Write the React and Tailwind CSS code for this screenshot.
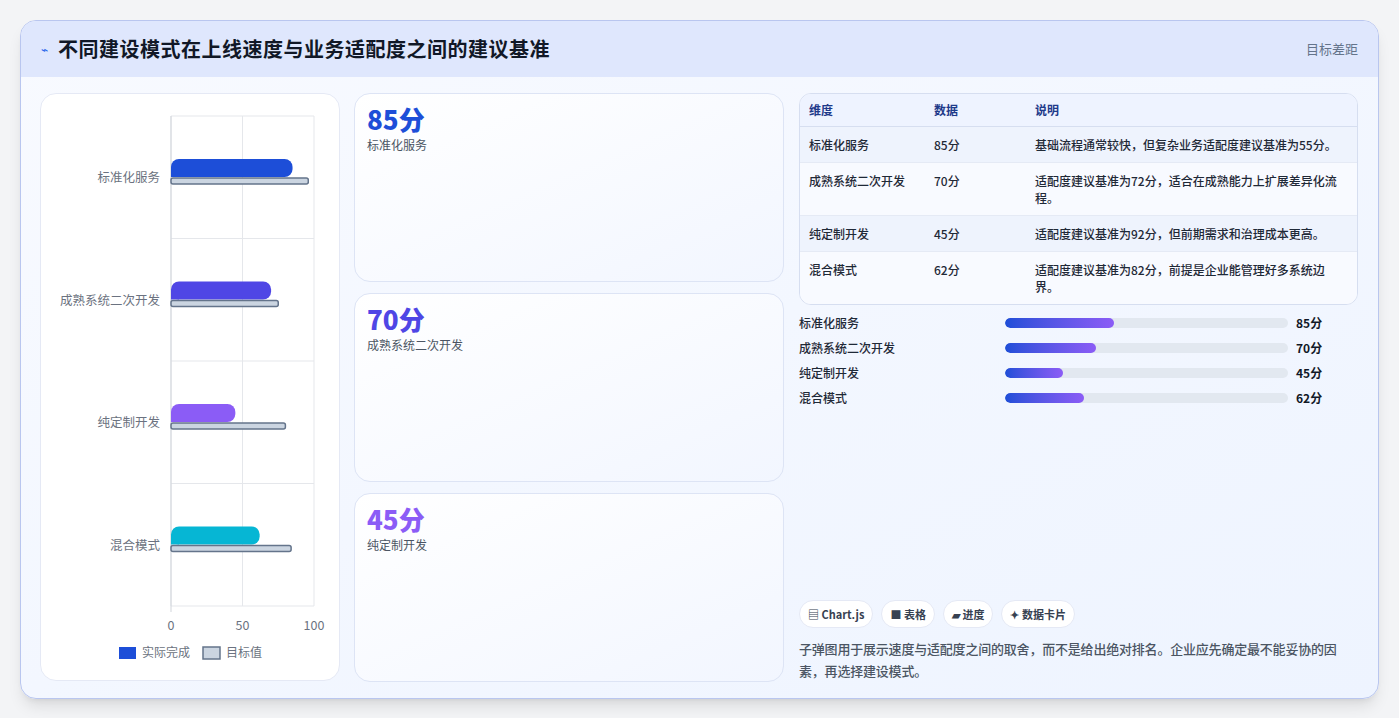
const rows = [
  { name: '标准化服务', v: 85, t: 96, c: '#1d4ed8', pct: 38.5, desc: '基础流程通常较快，但复杂业务适配度建议基准为55分。' },
  { name: '成熟系统二次开发', v: 70, t: 75, c: '#4f46e5', pct: 32, desc: '适配度建议基准为72分，适合在成熟能力上扩展差异化流程。' },
  { name: '纯定制开发', v: 45, t: 80, c: '#8b5cf6', pct: 20.5, desc: '适配度建议基准为92分，但前期需求和治理成本更高。' },
  { name: '混合模式', v: 62, t: 84, c: '#06b6d4', pct: 28, desc: '适配度建议基准为82分，前提是企业能管理好多系统边界。' },
];

const font = { fontFamily: '"Noto Sans CJK SC", "Noto Sans", sans-serif' };

function Chart() {
  const x0 = 130, sc = 1.43, top = 22, band = 122.5;
  return (
    <svg width="298" height="585" viewBox="0 0 298 585" style={font}>
      {[0, 50, 100].map((g) => (
        <line key={g} x1={x0 + g * sc} x2={x0 + g * sc} y1={top} y2={top + band * 4} stroke="#e5e7eb" />
      ))}
      {[0, 1, 2, 3, 4].map((i) => (
        <line key={i} x1={x0} x2={x0 + 143} y1={top + band * i} y2={top + band * i} stroke="#e5e7eb" />
      ))}
      <line x1={x0} x2={x0} y1={top} y2={top + band * 4 + 6} stroke="#d1d5db" />
      {rows.map((r, i) => {
        const cy = top + band * i + 61;
        return (
          <g key={r.name}>
            <text x={x0 - 11} y={cy + 5} textAnchor="end" fontSize="12.5" fill="#6b7280">{r.name}</text>
            <rect x={x0} y={cy - 18} width={r.v * sc} height={18} rx="8" fill={r.c} />
            <rect x={x0} y={cy - 8} width={8} height={8} fill={r.c} />
            <rect x={x0} y={cy + 1} width={r.t * sc} height={6} rx="2" fill="#cbd5e1" stroke="#64748b" strokeWidth="1.5" />
          </g>
        );
      })}
      {[0, 50, 100].map((g) => (
        <text key={g} x={x0 + g * sc} y={top + band * 4 + 24} textAnchor="middle" fontSize="12.5" fill="#6b7280">{g}</text>
      ))}
      <rect x="78" y="553" width="17" height="12" fill="#1d4ed8" />
      <text x="101" y="563" fontSize="12" fill="#6b7280">实际完成</text>
      <rect x="162" y="553" width="17" height="12" fill="#cbd5e1" stroke="#64748b" strokeWidth="1.5" />
      <text x="185" y="563" fontSize="12" fill="#6b7280">目标值</text>
    </svg>
  );
}

export default function App() {
  return (
    <div className="w-[1399px] h-[718px] bg-[#f3f4f6] pt-5 pl-5" style={font}>
      <div className="w-[1359px] h-[679px] rounded-2xl border border-[#b9c6ef] bg-gradient-to-br from-[#f8faff] to-[#eef4ff] overflow-hidden shadow-lg flex flex-col">
        <div className="h-[56px] shrink-0 bg-[#dfe7fd] flex items-center justify-between px-5">
          <div className="flex items-center gap-[10px]">
            <span className="text-[#2563eb] text-xs">⌁</span>
            <h1 className="text-[20px] font-bold text-[#111827] tracking-[0.5px]">不同建设模式在上线速度与业务适配度之间的建议基准</h1>
          </div>
          <span className="text-[13px] text-[#64748b]">目标差距</span>
        </div>
        <div className="flex-1 flex gap-[14px] pl-[19px] pr-5 pb-5 pt-[16px]">
          <div className="w-[300px] h-[588px] bg-white rounded-2xl border border-[#e5e9f5] overflow-hidden">
            <Chart />
          </div>
          <div className="w-[430px] flex flex-col gap-[11px]">
            {rows.slice(0, 3).map((r) => (
              <div key={r.name} className="h-[189px] rounded-2xl border border-[#dde4f5] bg-gradient-to-br from-white to-[#f2f6ff] px-[12px] pt-[9px]">
                <div className="text-[26px] font-extrabold leading-[32px]" style={{ color: r.c }}>{r.v}分</div>
                <div className="text-[12px] text-[#4b5563] mt-[1px]">{r.name}</div>
              </div>
            ))}
          </div>
          <div className="flex-1 flex flex-col pl-[1px]">
            <div className="rounded-xl border border-[#d6def0] overflow-hidden bg-white/60 text-[12px]">
              <div className="flex h-[33px] items-center font-bold text-[#1e3a8a] bg-[#eef3ff] border-b border-[#d6def0]">
                <div className="w-[134px] pl-[9px]">维度</div>
                <div className="w-[101px]">数据</div>
                <div className="flex-1">说明</div>
              </div>
              {rows.map((r, i) => (
                <div key={r.name} className={`flex py-[9px] text-[#1f2937] font-medium ${i < 3 ? 'border-b border-[#e5eaf5]' : ''} ${i % 2 === 0 ? 'bg-[#eef3fd]' : 'bg-[#f8faff]'}`}>
                  <div className="w-[134px] pl-[9px] leading-[17px]">{r.name}</div>
                  <div className="w-[101px] leading-[17px]">{r.v}分</div>
                  <div className="flex-1 pr-3 leading-[17px]">{r.desc}</div>
                </div>
              ))}
            </div>
            <div className="mt-[9px] flex flex-col gap-[8px]">
              {rows.map((r) => (
                <div key={r.name} className="flex items-center h-[17px] text-[12px] font-medium text-[#1f2937]">
                  <div className="w-[206px]">{r.name}</div>
                  <div className="w-[283px] h-[10px] rounded-full bg-[#e2e8f0] overflow-hidden">
                    <div className="h-full rounded-full bg-gradient-to-r from-[#1d4ed8] to-[#8b5cf6]" style={{ width: `${r.pct}%` }} />
                  </div>
                  <div className="ml-2 font-bold text-[#111827]">{r.v}分</div>
                </div>
              ))}
            </div>
            <div className="flex-1" />
            <div className="flex gap-[8px]">
              {['▤ Chart.js', '■ 表格', '▰ 进度', '✦ 数据卡片'].map((t) => (
                <span key={t} className="h-[28px] px-[8px] flex items-center rounded-full bg-white border border-[#e5e9f5] text-[11px] font-bold text-[#374151]">{t}</span>
              ))}
            </div>
            <p className="mt-[10px] text-[13px] leading-[22px] text-[#4b5563] font-medium tracking-[-0.2px]">
              子弹图用于展示速度与适配度之间的取舍，而不是给出绝对排名。企业应先确定最不能妥协的因素，再选择建设模式。
            </p>
          </div>
        </div>
      </div>
    </div>
  );
}
